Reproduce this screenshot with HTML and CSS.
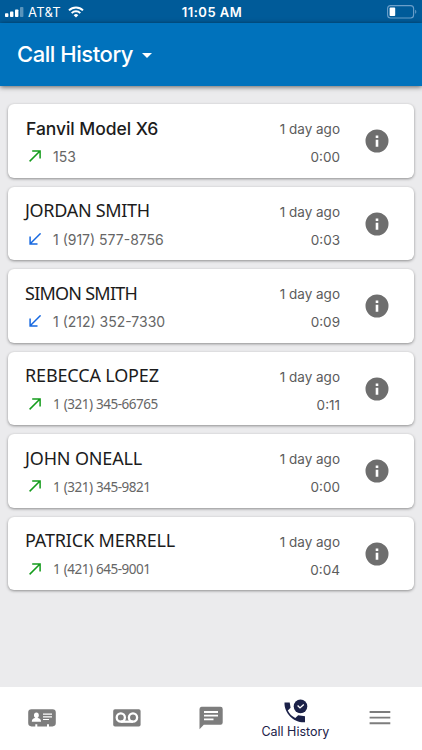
FILE: index.html
```html
<!DOCTYPE html>
<html lang="en">
<head>
    <meta charset="UTF-8">
    <meta name="viewport" content="width=device-width, initial-scale=1.0">
    <title>Call History</title>
    <link rel="stylesheet" href="styles.css">
</head>
<body>
    <!-- shared icons -->
    <svg class="sprite" aria-hidden="true">
        <symbol id="icon-out" viewBox="0 0 12 12">
            <path d="M.6 11.4 11 1M3.2.9h7.9v7.6" fill="none" stroke="currentColor" stroke-width="1.5"/>
        </symbol>
        <symbol id="icon-in" viewBox="0 0 12 12">
            <path d="M11.6.4 1.2 10.8M1.1 3.6v7.3h7.4" fill="none" stroke="currentColor" stroke-width="1.5"/>
        </symbol>
        <symbol id="icon-info" viewBox="0 0 24 24">
            <path fill="currentColor" fill-rule="evenodd" d="M12 .5a11.5 11.5 0 1 0 0 23 11.5 11.5 0 0 0 0-23zM10.7 6.4h2.6v2.5h-2.6zM10.7 10.8h2.6v7h-2.6z"/>
        </symbol>
    </svg>

    <div class="status-bar">
        <div class="carrier">
            <svg class="signal" width="19" height="10" viewBox="0 0 19 10" fill="#fff">
                <rect x="0" y="6.2" width="3.4" height="3.8" rx=".8"/>
                <rect x="5" y="4.6" width="3.4" height="5.4" rx=".8"/>
                <rect x="10" y="2.5" width="3.4" height="7.5" rx=".8"/>
                <rect x="15" y="0" width="3.4" height="10" rx=".8" opacity=".35"/>
            </svg>
            <span>AT&amp;T</span>
            <svg class="wifi" width="16" height="12" viewBox="0 0 16 12" fill="none" stroke="#fff" stroke-width="2">
                <path d="M1 4.4a10 10 0 0 1 14 0M3.7 7.1a6.1 6.1 0 0 1 8.6 0"/>
                <path d="M8 11.5 5.7 9.2a3.3 3.3 0 0 1 4.6 0z" fill="#fff" stroke="none"/>
            </svg>
        </div>
        <div class="clock">11:05 AM</div>
        <svg class="battery" width="30" height="14" viewBox="0 0 30 14">
            <rect x=".6" y=".6" width="26" height="12.4" rx="3" fill="none" stroke="#6b9fca" stroke-width="1.1"/>
            <rect x="2.6" y="2.6" width="5.6" height="8.4" rx=".8" fill="#fff"/>
            <path d="M28.2 4.8c1.5.6 1.5 3.4 0 4z" fill="#6b9fca"/>
        </svg>
    </div>

    <div class="header">
        <h1>Call History</h1>
        <span class="caret"></span>
    </div>

    <div class="calls">
        <div class="call-card">
            <div class="call-main">
                <div class="call-name name-inter">Fanvil Model X6</div>
                <div class="call-number"><svg class="arrow out"><use href="#icon-out"/></svg>153</div>
            </div>
            <div class="call-meta"><div>1 day ago</div><div>0:00</div></div>
            <svg class="info"><use href="#icon-info"/></svg>
        </div>

        <div class="call-card">
            <div class="call-main">
                <div class="call-name name-tight">JORDAN SMITH</div>
                <div class="call-number"><svg class="arrow in"><use href="#icon-in"/></svg>1 (917) 577-8756</div>
            </div>
            <div class="call-meta"><div>1 day ago</div><div>0:03</div></div>
            <svg class="info"><use href="#icon-info"/></svg>
        </div>

        <div class="call-card">
            <div class="call-main">
                <div class="call-name name-tighter">SIMON SMITH</div>
                <div class="call-number"><svg class="arrow in"><use href="#icon-in"/></svg>1 (212) 352-7330</div>
            </div>
            <div class="call-meta"><div>1 day ago</div><div>0:09</div></div>
            <svg class="info"><use href="#icon-info"/></svg>
        </div>

        <div class="call-card">
            <div class="call-main">
                <div class="call-name">REBECCA LOPEZ</div>
                <div class="call-number number-noto"><svg class="arrow out"><use href="#icon-out"/></svg>1 (321) 345-66765</div>
            </div>
            <div class="call-meta"><div>1 day ago</div><div>0:11</div></div>
            <svg class="info"><use href="#icon-info"/></svg>
        </div>

        <div class="call-card">
            <div class="call-main">
                <div class="call-name">JOHN ONEALL</div>
                <div class="call-number number-noto"><svg class="arrow out"><use href="#icon-out"/></svg>1 (321) 345-9821</div>
            </div>
            <div class="call-meta"><div>1 day ago</div><div>0:00</div></div>
            <svg class="info"><use href="#icon-info"/></svg>
        </div>

        <div class="call-card">
            <div class="call-main">
                <div class="call-name">PATRICK MERRELL</div>
                <div class="call-number number-noto"><svg class="arrow out"><use href="#icon-out"/></svg>1 (421) 645-9001</div>
            </div>
            <div class="call-meta"><div>1 day ago</div><div>0:04</div></div>
            <svg class="info"><use href="#icon-info"/></svg>
        </div>
    </div>

    <div class="tabs">
        <div class="tab">
            <svg width="28" height="18" viewBox="0 0 28 18">
                <path fill="#7d7d7d" d="M3.5.3h21A3.3 3.3 0 0 1 27.8 3.6v10.5a3.3 3.3 0 0 1-3.3 3.3H21v-2.2h-2v2.2H9.3v-2.2h-2v2.2H3.5A3.3 3.3 0 0 1 .2 14.1V3.6A3.3 3.3 0 0 1 3.5.3z"/>
                <ellipse cx="8.4" cy="6.2" rx="2.4" ry="2.8" fill="#fff"/>
                <path fill="#fff" d="M3.8 12.8c0-2.5 1-3.3 3-3.8h3.2c2 .5 3 1.3 3 3.8z"/>
                <path d="M15 5.2h9M15 7.9h9M15 10.5h6" stroke="#fff" stroke-width="1.2"/>
            </svg>
        </div>
        <div class="tab">
            <svg width="28" height="18" viewBox="0 0 28 18">
                <rect x=".2" y=".3" width="27.4" height="17.2" rx="1.8" fill="#7d7d7d"/>
                <g fill="none" stroke="#fff" stroke-width="2.3">
                    <circle cx="7.8" cy="8.5" r="4.1"/>
                    <circle cx="20" cy="8.5" r="4.1"/>
                    <path d="M7.8 12.7h12.2"/>
                </g>
            </svg>
        </div>
        <div class="tab">
            <svg width="24" height="24" viewBox="0 0 24 24">
                <path fill="#7d7d7d" d="M2.5.7h19a2.2 2.2 0 0 1 2.2 2.2v13.7a2.2 2.2 0 0 1-2.2 2.2H4.8L.5 23.2V2.9A2.2 2.2 0 0 1 2.5.7z"/>
                <path d="M5 6h14M5 9.7h14M5 13.3h9.5" stroke="#fff" stroke-width="1.8"/>
            </svg>
        </div>
        <div class="tab active">
            <svg width="25" height="25" viewBox="0 0 25 25">
                <path d="M1.5 3.4h5.2l.9 5.4-2.8 2.8c1.6 3.3 4.1 5.9 7.5 7.5l2.9-2.8 6.8 1v5.9C11.5 24 1 14.5 1.5 3.4z"/>
                <circle cx="17.5" cy="7.4" r="6.8"/>
                <path d="M14.6 6.6l2.4 2.3 3.8-3.5" fill="none" stroke="#fff" stroke-width="1.4"/>
            </svg>
            <span>Call History</span>
        </div>
        <div class="tab">
            <svg width="22" height="16" viewBox="0 0 22 16">
                <path d="M.6 2h20.7M.6 7.6h20.7M.6 13.2h20.7" stroke="#7d7d7d" stroke-width="1.9"/>
            </svg>
        </div>
    </div>
</body>
</html>
```

FILE: styles.css
```css
* {
    margin: 0;
    padding: 0;
    box-sizing: border-box;
}

body {
    height: 750px;
    display: flex;
    flex-direction: column;
    overflow: hidden;
    font-family: Inter, "Liberation Sans", sans-serif;
    background-color: #ebebed;
    color: #1c1c1c;
}

.sprite {
    display: none;
}

.status-bar {
    height: 23px;
    flex: none;
    display: grid;
    grid-template-columns: 1fr auto 1fr;
    align-items: center;
    padding: 1px 5px 0 5px;
    background-color: #005b99;
    color: #fff;
    font-size: 13px;
}

.carrier {
    display: flex;
    align-items: center;
    letter-spacing: 0.3px;
}

.signal {
    margin-right: 4px;
}

.wifi {
    margin-left: 7px;
}

.clock {
    padding-left: 2px;
    font-weight: 600;
    letter-spacing: 0.5px;
}

.battery {
    justify-self: end;
}

.header {
    position: relative;
    height: 63px;
    flex: none;
    display: flex;
    align-items: center;
    padding: 0 17px 2px;
    background-color: #0072bc;
    color: #fff;
    box-shadow: 0 1px 5px rgba(0,0,0,0.6);
}

.header h1 {
    font-size: 22px;
    font-weight: 500;
    letter-spacing: -0.45px;
}

.caret {
    margin: 4px 0 0 9px;
    border: 5.5px solid transparent;
    border-top-color: #fff;
    border-bottom: 0;
}

.calls {
    flex: 1;
    display: flex;
    flex-direction: column;
    gap: 9px;
    padding: 18.3px 8px 0;
}

.call-card {
    height: 73.5px;
    display: flex;
    align-items: center;
    padding: 0 25px 0 17px;
    background: white;
    border-radius: 6px;
    box-shadow: 0 1px 3px rgba(0,0,0,0.4);
}

.call-main {
    flex: 1;
    padding-top: 3px;
}

.call-name {
    height: 28px;
    line-height: 26px;
    font-family: "Noto Sans", sans-serif;
    font-size: 18px;
    letter-spacing: -0.15px;
    white-space: nowrap;
}

.name-inter {
    padding-left: 1px;
    line-height: 28px;
    font-family: Inter, sans-serif;
    font-size: 17.5px;
    font-weight: 500;
    letter-spacing: -0.05px;
}

.name-tight {
    letter-spacing: -0.3px;
}

.name-tighter {
    letter-spacing: -0.75px;
}

.call-number {
    height: 28px;
    display: flex;
    align-items: center;
    color: #666;
    font-size: 14px;
}

.number-noto {
    font-family: "Noto Sans", sans-serif;
    font-size: 13.5px;
    letter-spacing: -0.5px;
    word-spacing: 0.5px;
}

.arrow {
    width: 12px;
    height: 12px;
    margin: -1px 12px 0 4px;
}

.out {
    color: #149c1c;
}

.in {
    color: #1668e0;
}

.call-meta {
    margin-right: 25px;
    padding-top: 4px;
    color: #5c5c5c;
    font-size: 13.5px;
    line-height: 28px;
    text-align: right;
}

.info {
    width: 24px;
    height: 24px;
    color: #6e6e6e;
}

.tabs {
    height: 63px;
    flex: none;
    display: grid;
    grid-template-columns: repeat(5, 1fr);
    padding-bottom: 1px;
    background: white;
}

.tab {
    display: flex;
    flex-direction: column;
    align-items: center;
    justify-content: center;
}

.active {
    padding-top: 2px;
    color: #1b2148;
    fill: #1b2148;
    font-size: 12.5px;
    white-space: nowrap;
}
```
